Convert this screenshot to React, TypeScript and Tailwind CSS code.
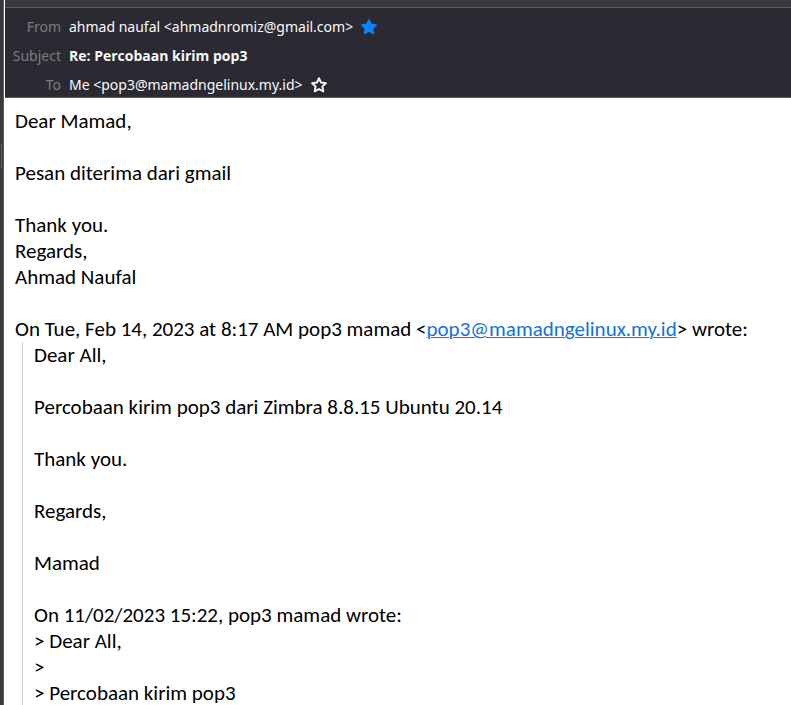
import type { ReactNode } from "react";

const intro = [
  "Dear Mamad,",
  "",
  "Pesan diterima dari gmail",
  "",
  "Thank you.",
  "Regards,",
  "Ahmad Naufal",
  "",
];

const quoted = [
  "Dear All,",
  "",
  "Percobaan kirim pop3 dari Zimbra 8.8.15 Ubuntu 20.14",
  "",
  "Thank you.",
  "",
  "Regards,",
  "",
  "Mamad",
  "",
  "On 11/02/2023 15:22, pop3 mamad wrote:",
  "> Dear All,",
  ">",
  "> Percobaan kirim pop3",
];

function StarButton({ filled, label }: { filled?: boolean; label: string }) {
  return (
    <button type="button" aria-label={label} className="ml-2 shrink-0">
      <svg viewBox="0 0 16 16" className="size-4">
        <path
          d="M8 1.2l2 4.3 4.9.7-3.5 3.2.9 4.9L8 12l-4.3 2.3.9-4.9L1.1 6.2 6 5.5z"
          fill={filled ? "#0a84ff" : "none"}
          stroke={filled ? "#0a84ff" : "#f9f9fa"}
          strokeWidth={filled ? 1.8 : 1.9}
          strokeLinejoin="round"
        />
      </svg>
    </button>
  );
}

function HeaderRow({ label, children }: { label: string; children: ReactNode }) {
  return (
    <div className="flex h-5 items-center">
      <dt className="w-14 shrink-0 text-right text-[#7c7c80]">{label}</dt>
      <dd className="ml-2 flex min-w-0 items-center whitespace-nowrap">{children}</dd>
    </div>
  );
}

function Lines({ lines }: { lines: string[] }) {
  return lines.map((line, index) => (
    <p key={index} className="min-h-[26px]">
      {line}
    </p>
  ));
}

export default function App() {
  return (
    <div className="flex h-screen overflow-hidden bg-white">
      {/* Pane splitter */}
      <div className="mr-px w-1 shrink-0 border-r border-[#5c5c61] bg-[#38383d] pt-36">
        <div className="h-6 w-0.5 border-y border-r border-[#5a5a5e]" />
      </div>

      <main className="min-w-0 flex-1">
        <div className="h-[7px] bg-[#38383d]" />
        <header className="border-y border-[#5c5c61] bg-[#2b2a33] pt-[9px] pb-0.5 font-['Noto_Sans',sans-serif] text-sm text-[#f9f9fa]">
          <dl className="flex flex-col gap-[9px]">
            <HeaderRow label="From">
              ahmad naufal &lt;ahmadnromiz@gmail.com&gt;
              <StarButton filled label="Edit contact" />
            </HeaderRow>
            <HeaderRow label="Subject">
              <span className="font-['Open_Sans',sans-serif] font-bold">Re: Percobaan kirim pop3</span>
            </HeaderRow>
            <HeaderRow label="To">
              Me &lt;pop3@mamadngelinux.my.id&gt;
              <StarButton label="Add to address book" />
            </HeaderRow>
          </dl>
        </header>

        <article className="px-[10px] pt-[10px] font-['Carlito','Lato',sans-serif] text-[21px] leading-[26px] text-black">
          <Lines lines={intro} />
          <p>
            On Tue, Feb 14, 2023 at 8:17 AM pop3 mamad &lt;
            <a href="mailto:pop3@mamadngelinux.my.id" className="text-[#1373d9] underline decoration-1">
              pop3@mamadngelinux.my.id
            </a>
            &gt; wrote:
          </p>
          <blockquote className="ml-[7px] border-l border-[#cccccc] pl-[11px]">
            <Lines lines={quoted} />
          </blockquote>
        </article>
      </main>
    </div>
  );
}
